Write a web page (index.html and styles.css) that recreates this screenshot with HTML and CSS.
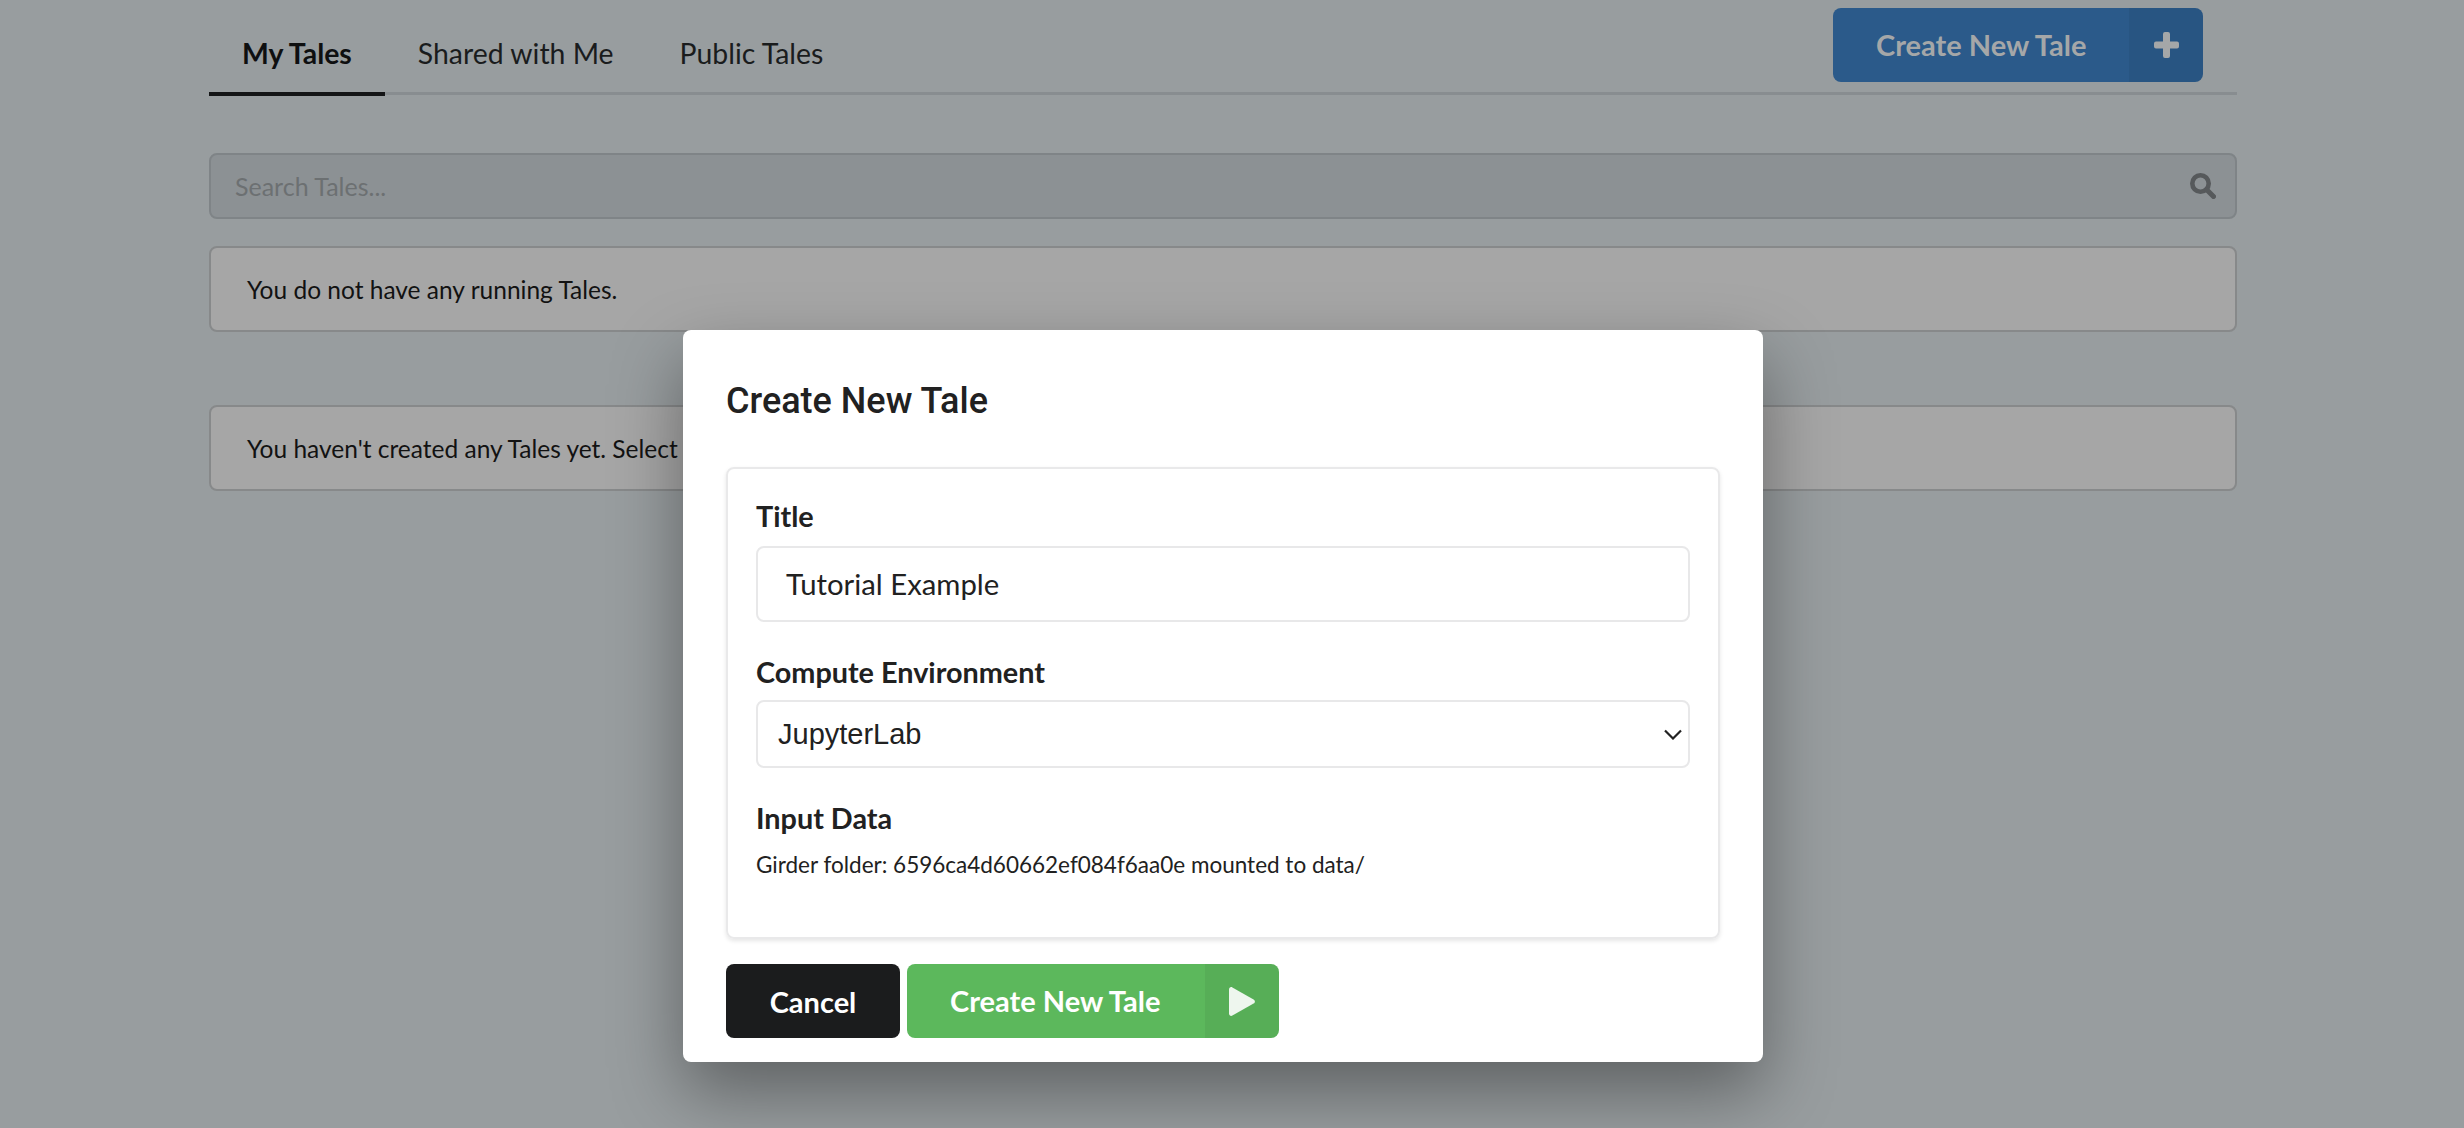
FILE: index.html
```html
<!DOCTYPE html>
<html lang="en">
<head>
  <meta charset="UTF-8" />
  <title>Create New Tale</title>
  <link rel="stylesheet" href="styles.css">
</head>

<body>
  <div class="page">
    <div class="tabs">
      <a class="tab active">My Tales</a>
      <a class="tab">Shared with Me</a>
      <a class="tab">Public Tales</a>
      <button class="btn btn-blue" type="button">
        <span class="btn-label">Create New Tale</span>
        <span class="btn-icon">
          <svg width="25" height="26" viewBox="0 0 25 26"><path d="M9 2a2 2 0 0 1 2-2h3a2 2 0 0 1 2 2v7.500h7a2 2 0 0 1 2 2v3a2 2 0 0 1-2 2h-7V24a2 2 0 0 1-2 2h-3a2 2 0 0 1-2-2v-7.500H2a2 2 0 0 1-2-2v-3a2 2 0 0 1 2-2h7z" fill="#a5a7a8"/></svg>
        </span>
      </button>
    </div>

    <div class="search">
      <span class="search-text">Search Tales...</span>
      <svg class="search-icon" width="26" height="26" viewBox="0 0 26 26"><circle cx="10.500" cy="10.500" r="8.200" fill="none" stroke="#56595b" stroke-width="4.600"/><path d="M16.500 16.500l7 7" stroke="#56595b" stroke-width="5" stroke-linecap="round"/></svg>
    </div>

    <div class="panel">You do not have any running Tales.</div>
    <div class="panel panel-last">You haven't created any Tales yet. Select</div>
  </div>

  <div class="overlay">
    <div class="modal">
      <h2>Create New Tale</h2>
      <div class="form-card">
        <label>Title</label>
        <div class="input">Tutorial Example</div>

        <label class="label-env">Compute Environment</label>
        <div class="select">
          <span>JupyterLab</span>
          <svg width="18" height="11" viewBox="0 0 18 11"><path d="M1 1.500l8 8 8-8" fill="none" stroke="#222" stroke-width="2.200"/></svg>
        </div>

        <label class="label-data">Input Data</label>
        <p class="mount">Girder folder: 6596ca4d60662ef084f6aa0e mounted to data/</p>
      </div>
      <div class="actions">
        <button class="btn btn-black" type="button">Cancel</button>
        <button class="btn btn-green" type="button">
          <span class="btn-label">Create New Tale</span>
          <span class="btn-icon">
            <svg width="26" height="29" viewBox="0 0 26 29"><path d="M0 2.500C0 .6 1.800-.5 3.400.4l21.200 12c1.700 1 1.700 3.200 0 4.200l-21.200 12C1.800 29.500 0 28.400 0 26.500z" fill="#eef6ee"/></svg>
          </span>
        </button>
      </div>
    </div>
  </div>
</body>
</html>
```

FILE: styles.css
```css
/* --- Global --- */
* { box-sizing: border-box; margin: 0; padding: 0; }
html, body { height: 100%; overflow: hidden; }
body {
  font-family: 'Lato', sans-serif;
  font-size: 28.400px;
  background: #989d9f;
  color: #111213;
}

/* --- Dimmed page --- */
.page {
  width: 2028px;
  margin-left: 209px;
}

.tabs {
  display: flex;
  height: 95px;
  border-bottom: 3px solid #888d90;
}
.tab {
  height: 93px;
  padding: 37px 33px 0;
  line-height: 32px;
  color: #1a1c1d;
}
.tab.active {
  height: 96px;
  font-weight: 700;
  color: #0e0f10;
  border-bottom: 4px solid #141516;
  margin-bottom: -3px;
}

.search {
  display: flex;
  align-items: center;
  justify-content: space-between;
  height: 66px;
  margin-top: 58px;
  padding: 0 19px 0 24px;
  background: #8c9194;
  border: 2px solid #7f8487;
  border-radius: 8px;
  font-size: 25px;
}
.search-text { color: #6c7072; }

.panel {
  height: 86px;
  margin-top: 27px;
  padding: 0 36px;
  line-height: 83px;
  background: #a6a6a6;
  border: 2px solid #87898a;
  border-radius: 8px;
  color: #121212;
  font-size: 24.500px;
}
.panel-last { margin-top: 73px; }

/* --- Buttons --- */
.btn {
  display: inline-flex;
  align-items: stretch;
  height: 74px;
  border: none;
  border-radius: 8px;
  font-family: inherit;
  font-size: 29px;
  font-weight: 700;
  overflow: hidden;
}
.btn-label {
  padding-left: 43px;
  line-height: 74px;
  white-space: nowrap;
}
.btn-icon {
  display: flex;
  align-items: center;
  justify-content: center;
  width: 74px;
  background: rgba(0,0,0,0.05);
}
.btn-blue {
  margin: 8px 34px 0 auto;
  width: 370px;
  background: #2b5a8a;
  color: #a5a7a8;
}
.btn-blue .btn-label { flex: 1; text-align: left; }
.btn-black {
  width: 174px;
  justify-content: center;
  align-items: center;
  background: #1b1c1d;
  color: #fff;
}
.btn-green {
  width: 372px;
  background: #5cb85c;
  color: #fff;
}
.btn-green .btn-label { flex: 1; text-align: left; }

/* --- Modal --- */
.overlay {
  position: absolute;
  top: 0;
  left: 0;
  width: 2446px;
  height: 100%;
  display: flex;
  justify-content: center;
  padding-top: 330px;
}
.modal {
  width: 1080px;
  height: 732px;
  padding: 0 43px;
  background: #fff;
  border-radius: 8px;
  color: #212121;
  box-shadow: 0 30px 70px rgba(0,0,0,0.38);
}
.modal h2 {
  font-family: 'Roboto', sans-serif;
  font-size: 36px;
  font-weight: 500;
  line-height: 42px;
  padding-top: 50px;
  height: 137px;
}

.form-card {
  height: 472px;
  padding: 30px 28px 0;
  border: 2px solid #e9e9ea;
  border-radius: 8px;
  box-shadow: 0 2px 4px rgba(0,0,0,0.1);
}
.form-card label {
  display: block;
  font-weight: 700;
  font-size: 28.800px;
  line-height: 34px;
}
.input {
  height: 76px;
  margin-top: 13px;
  padding-left: 28px;
  line-height: 72px;
  font-size: 29.300px;
  border: 2px solid #e8e8e9;
  border-radius: 8px;
}
.label-env { margin-top: 33px; }
.select {
  display: flex;
  align-items: center;
  justify-content: space-between;
  height: 68px;
  margin-top: 11px;
  padding: 0 6px 0 20px;
  font-family: 'Liberation Sans', sans-serif;
  font-size: 29px;
  border: 2px solid #e8e8e9;
  border-radius: 8px;
}
.label-data { margin-top: 33px; }
.mount {
  margin-top: 14px;
  font-size: 22.500px;
  line-height: 32px;
}

.actions {
  display: flex;
  gap: 7px;
  margin-top: 25px;
}
```
